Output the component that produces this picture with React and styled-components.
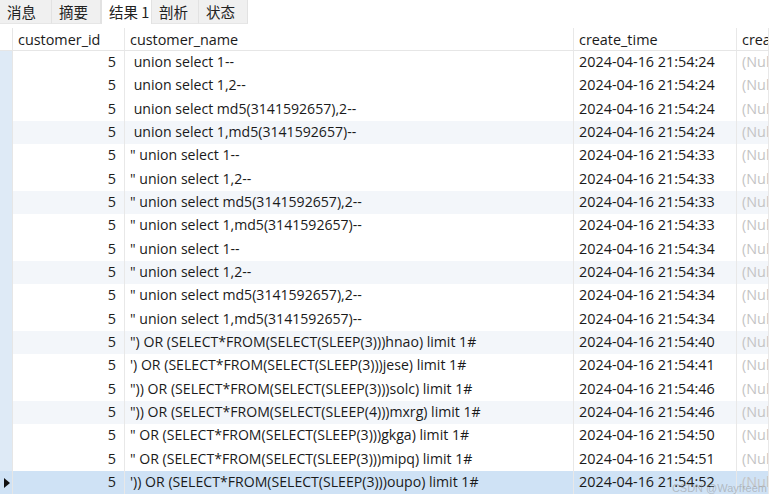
import React from 'react'
import styled, { createGlobalStyle } from 'styled-components'

const GlobalStyle = createGlobalStyle`
  html, body {
    margin: 0;
    padding: 0;
    background: #ffffff;
  }
  body {
    font-family: "Open Sans", "Noto Sans CJK SC", sans-serif;
    color: #1a1a1a;
  }
`

const COLS = '13px 112px 449px 163px 1fr'

const Page = styled.div`
  position: relative;
  width: 769px;
  height: 500px;
  overflow: hidden;
  background: #fff;
`

const TabBar = styled.div`
  display: flex;
  height: 24px;
  background: #fff;
`

const Tab = styled.div`
  width: ${p => p.w}px;
  box-sizing: border-box;
  padding-left: 7px;
  font-size: 14.5px;
  line-height: 24px;
  font-family: "Noto Sans CJK SC", sans-serif;
  color: #222;
  background: ${p => (p.active ? '#ffffff' : '#f0f0f0')};
  border-right: 1px solid #e2e2e2;
  border-left: ${p => (p.active ? '1px solid #e2e2e2' : 'none')};
  border-bottom: ${p => (p.active ? 'none' : '1px solid #e6e6e6')};
`

const Gap = styled.div`
  height: 4px;
`

const Grid = styled.div`
  display: flex;
  flex-direction: column;
`

const HeaderRow = styled.div`
  display: grid;
  grid-template-columns: ${COLS};
  height: 23px;
  border-bottom: 1px solid #e6e6e6;
  box-sizing: border-box;
`

const Row = styled.div`
  display: grid;
  grid-template-columns: ${COLS};
  height: 23.33px;
  background: ${p => (p.selected ? '#cfe2f5' : p.tint ? '#f3f6fa' : '#ffffff')};
`

const Indicator = styled.div`
  display: flex;
  align-items: center;
  justify-content: center;
  background: ${p => (p.head ? '#ffffff' : p.selected ? '#cfe2f5' : '#deeaf6')};
  border-right: 1px solid #e6e6e6;
`

const Arrow = styled.span`
  width: 0;
  height: 0;
  border-top: 5px solid transparent;
  border-bottom: 5px solid transparent;
  border-left: 6px solid #111;
  margin-left: 2px;
`

const Cell = styled.div`
  box-sizing: border-box;
  padding: 0 ${p => (p.right ? '8px' : '0')} 0 ${p => (p.right ? '0' : '5px')};
  font-size: ${p => (p.wide ? '14.1px' : '14.4px')};
  line-height: ${p => (p.head ? '23px' : '22.5px')};
  text-align: ${p => (p.right ? 'right' : 'left')};
  white-space: pre;
  overflow: hidden;
  color: ${p => (p.muted ? '#c4c4c4' : '#1a1a1a')};
  border-right: 1px solid #e8e8e8;
`

const Watermark = styled.div`
  position: absolute;
  right: 2px;
  bottom: 6px;
  font-size: 11px;
  font-family: "Liberation Sans", sans-serif;
  color: rgba(150, 150, 150, 0.55);
`

const tabs = [
  { label: '消息', w: 52 },
  { label: '摘要', w: 49 },
  { label: '结果 1', w: 51, active: true },
  { label: '剖析', w: 47 },
  { label: '状态', w: 49 },
]

const rows = [
  [' union select 1--', '24'],
  [' union select 1,2--', '24'],
  [' union select md5(3141592657),2--', '24'],
  [' union select 1,md5(3141592657)--', '24'],
  ['" union select 1--', '33'],
  ['" union select 1,2--', '33'],
  ['" union select md5(3141592657),2--', '33'],
  ['" union select 1,md5(3141592657)--', '33'],
  ['" union select 1--', '34'],
  ['" union select 1,2--', '34'],
  ['" union select md5(3141592657),2--', '34'],
  ['" union select 1,md5(3141592657)--', '34'],
  ['") OR (SELECT*FROM(SELECT(SLEEP(3)))hnao) limit 1#', '40'],
  ['\') OR (SELECT*FROM(SELECT(SLEEP(3)))jese) limit 1#', '41'],
  ['")) OR (SELECT*FROM(SELECT(SLEEP(3)))solc) limit 1#', '46'],
  ['")) OR (SELECT*FROM(SELECT(SLEEP(4)))mxrg) limit 1#', '46'],
  ['" OR (SELECT*FROM(SELECT(SLEEP(3)))gkga) limit 1#', '50'],
  ['" OR (SELECT*FROM(SELECT(SLEEP(3)))mipq) limit 1#', '51'],
  ['\')) OR (SELECT*FROM(SELECT(SLEEP(3)))oupo) limit 1#', '52'],
]

export default function App() {
  return (
    <Page>
      <GlobalStyle />
      <TabBar>
        {tabs.map(t => (
          <Tab key={t.label} w={t.w} active={t.active}>
            {t.label}
          </Tab>
        ))}
      </TabBar>
      <Gap />
      <Grid>
        <HeaderRow>
          <Indicator head />
          <Cell head>customer_id</Cell>
          <Cell head>customer_name</Cell>
          <Cell head>create_time</Cell>
          <Cell head>create_by</Cell>
        </HeaderRow>
        {rows.map(([name, sec], i) => {
          const selected = i === rows.length - 1
          return (
            <Row key={i} selected={selected} tint={(i + 1) % 3 === 1 && i > 0}>
              <Indicator selected={selected}>{selected && <Arrow />}</Indicator>
              <Cell right>5</Cell>
              <Cell wide>{name}</Cell>
              <Cell>{`2024-04-16 21:54:${sec}`}</Cell>
              <Cell muted>(Null)</Cell>
            </Row>
          )
        })}
      </Grid>
      <Watermark>CSDN @Wayfreem</Watermark>
    </Page>
  )
}
